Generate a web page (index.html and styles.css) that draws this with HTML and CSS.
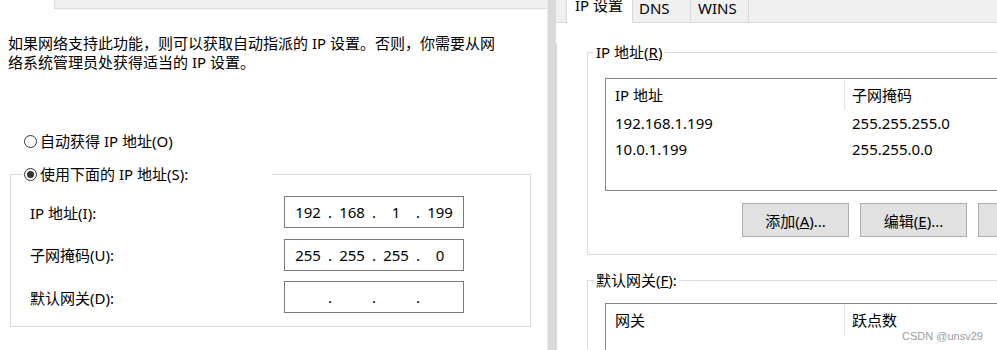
FILE: index.html
```html
<!DOCTYPE html>
<html lang="zh-CN">
<head>
  <meta charset="UTF-8" />
  <title>Internet 协议版本 4 (TCP/IPv4) 属性</title>
  <link rel="stylesheet" href="styles.css">
</head>
<body>

  <div class="screen">
    <section class="dlg-left">
      <div class="tab-edge">
        <span class="tab-edge-sel"></span>
        <span class="tab-edge-rest"></span>
      </div>

      <p class="intro">如果网络支持此功能，则可以获取自动指派的 IP 设置。否则，你需要从网络系统管理员处获得适当的 IP 设置。</p>

      <div class="radio-row auto"><span class="radio"></span>自动获得 IP 地址(O)</div>

      <fieldset class="group manual">
        <legend class="radio-row"><span class="radio checked"></span>使用下面的 IP 地址(S):</legend>
        <div class="ip-grid">
          <span class="ip-label">IP 地址(I):</span>
          <div class="ip-box"><span>192</span><i>.</i><span>168</span><i>.</i><span>1</span><i>.</i><span>199</span></div>

          <span class="ip-label">子网掩码(U):</span>
          <div class="ip-box"><span>255</span><i>.</i><span>255</span><i>.</i><span>255</span><i>.</i><span>0</span></div>

          <span class="ip-label">默认网关(D):</span>
          <div class="ip-box"><span></span><i>.</i><span></span><i>.</i><span></span><i>.</i><span></span></div>
        </div>
      </fieldset>
    </section>

    <div class="dlg-gap"></div>

    <section class="dlg-right">
      <div class="tabs">
        <span class="tab-lead"></span>
        <span class="tab tab-active">IP 设置</span>
        <span class="tab tab-dns">DNS</span>
        <span class="tab tab-wins">WINS</span>
      </div>

      <div class="page">
        <fieldset class="group addr">
          <legend>IP 地址(<u>R</u>)</legend>
          <div class="list">
            <div class="list-head">
              <span class="c1">IP 地址</span>
              <span class="c2">子网掩码</span>
            </div>
            <div class="list-row">
              <span class="c1">192.168.1.199</span>
              <span class="c2">255.255.255.0</span>
            </div>
            <div class="list-row">
              <span class="c1">10.0.1.199</span>
              <span class="c2">255.255.0.0</span>
            </div>
          </div>
          <div class="btn-row">
            <button>添加(<u>A</u>)...</button>
            <button>编辑(<u>E</u>)...</button>
            <button>删除(<u>V</u>)</button>
          </div>
        </fieldset>

        <fieldset class="group gw">
          <legend>默认网关(<u>F</u>):</legend>
          <div class="list list-gw">
            <div class="list-head">
              <span class="c1">网关</span>
              <span class="c2">跃点数</span>
            </div>
          </div>
        </fieldset>
      </div>
    </section>

    <div class="watermark">CSDN @unsv29</div>
  </div>

</body>
</html>
```

FILE: styles.css
```css
* {
  box-sizing: border-box;
}

body {
  margin: 0;
  font-family: "Noto Sans", "Noto Sans CJK SC", sans-serif;
  font-size: 15px;
  color: #000;
  background: #fff;
}

.screen {
  position: relative;
  display: flex;
  width: 997px;
  height: 350px;
  overflow: hidden;
}

/* left dialog */
.dlg-left {
  width: 547px;
  flex: none;
  background: #fff;
}

.tab-edge {
  display: flex;
  height: 9px;
}

.tab-edge-sel {
  width: 54px;
}

.tab-edge-rest {
  flex: 1;
  background: #f0f0f0;
  border-left: 1px solid #d9d9d9;
  border-bottom: 1px solid #d9d9d9;
}

.intro {
  margin: 25px 0 0 8px;
  width: 500px;
  line-height: 19px;
}

.radio-row {
  display: flex;
  align-items: center;
  gap: 3px;
  line-height: 19px;
}

.auto {
  margin: 60px 0 0 24px;
}

.radio {
  width: 13px;
  height: 13px;
  border: 1px solid #333;
  border-radius: 50%;
  display: flex;
  align-items: center;
  justify-content: center;
  background: #fff;
  flex: none;
}

.radio.checked::after {
  content: "";
  width: 7px;
  height: 7px;
  border-radius: 50%;
  background: #333;
}

.group {
  margin: 0;
  padding: 0;
  border: 1px solid #dcdcdc;
  min-width: 0;
}

.manual {
  margin: 14px 0 0 10px;
  width: 521px;
}

.manual legend {
  margin-left: 12px;
  padding: 0 0 0 1px;
  width: 249px;
}

.ip-grid {
  display: grid;
  grid-template-columns: 254px 180px;
  row-gap: 10.5px;
  align-items: center;
  padding: 12px 0 13px 19px;
}

.ip-box {
  display: flex;
  align-items: center;
  height: 32px;
  padding-left: 5px;
  border: 1px solid #7a7a7a;
  background: #fff;
}

.ip-box span {
  width: 36px;
  text-align: center;
}

.ip-box i {
  width: 8px;
  text-align: center;
  font-style: normal;
}

.dlg-gap {
  width: 9px;
  flex: none;
  background: #d9d9d9;
  border-left: 1px solid #ececec;
}

/* right dialog */
.dlg-right {
  flex: 1;
  min-width: 0;
  overflow: hidden;
}

.tabs {
  display: flex;
  height: 23px;
  background: #f0f0f0;
  border-bottom: 1px solid #d9d9d9;
}

.tab-lead {
  width: 10px;
  flex: none;
}

.tab {
  flex: none;
  height: 22px;
  line-height: 16px;
  border-right: 1px solid #d9d9d9;
}

.tab-active {
  width: 67px;
  height: 23px;
  padding-left: 8px;
  line-height: 10px;
  background: #fff;
  border-left: 1px solid #d9d9d9;
}

.tab-dns {
  width: 58px;
  padding-left: 6px;
}

.tab-wins {
  width: 58px;
  padding-left: 7px;
}

.page {
  height: 327px;
  padding-left: 30px;
  background: #fff;
  border-left: 1px solid #d9d9d9;
}

.group legend {
  line-height: 19px;
}

.addr,
.gw {
  width: 480px;
}

.addr {
  margin-top: 20px;
  padding-bottom: 17px;
}

.addr legend,
.gw legend {
  margin-left: 6px;
  padding: 0 2px;
}

.list {
  margin: 16px 0 0 17px;
  width: 460px;
  height: 113px;
  border: 1px solid #828790;
  background: #fff;
}

.list-head {
  display: flex;
  align-items: center;
  height: 31px;
}

.list-row {
  display: flex;
  align-items: center;
  height: 26px;
}

.c1 {
  width: 239px;
  padding-left: 9px;
  flex: none;
}

.c2 {
  padding-left: 7px;
}

.list-head .c1 {
  height: 30px;
  line-height: 30px;
  border-right: 1px solid #e5e5e5;
}

.btn-row {
  display: flex;
  gap: 11px;
  margin: 12px 0 0 154px;
}

.btn-row button {
  flex: none;
  width: 107px;
  height: 34px;
  padding: 0;
  font: inherit;
  color: #000;
  background: #e1e1e1;
  border: 1px solid #adadad;
}

.gw {
  margin-top: 16px;
}

.list-gw {
  margin-top: 13px;
  height: 80px;
}

.watermark {
  position: absolute;
  left: 902px;
  top: 329px;
  font-family: "Liberation Sans", Arial, sans-serif;
  font-size: 11px;
  line-height: 14px;
  color: #9b9b9b;
}
```
